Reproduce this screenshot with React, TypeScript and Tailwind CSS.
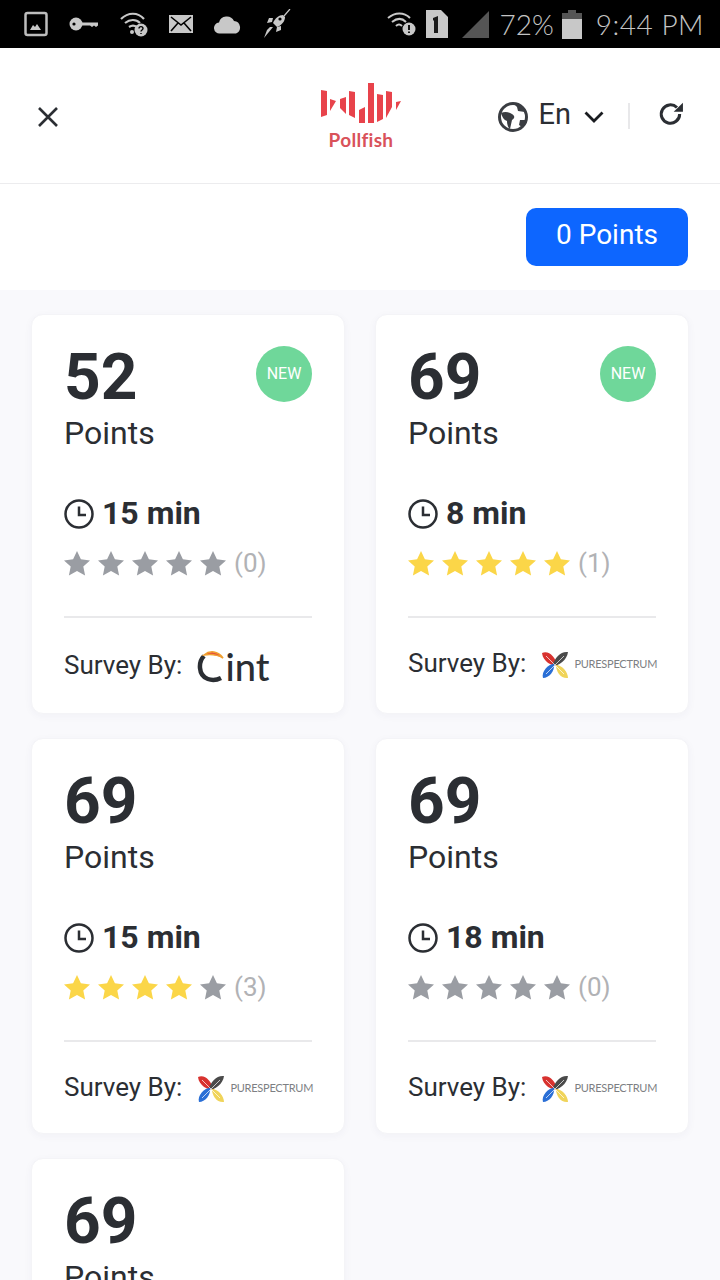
import React from "react";

const roboto = { fontFamily: "Roboto, sans-serif" };

const StatusLeft = () => (
  <div className="flex items-center pl-[24px] gap-[21px]">
    <svg width="24" height="26" viewBox="0 0 24 26">
      <rect x="1.5" y="2" width="21" height="22" rx="2" fill="none" stroke="#bdbdbd" strokeWidth="2.5" />
      <path d="M6 19l3-5 2 2 2-3 4 6z" fill="#c8c8c8" />
    </svg>
    <svg width="30" height="18" viewBox="0 0 30 18">
      <circle cx="7" cy="9" r="6.5" fill="#c8c8c8" />
      <circle cx="5" cy="9" r="1.6" fill="#000" />
      <path d="M12 7.5h17v3l-2 1.5-2-1.5-2 1.5-2-1.5h-9z" fill="#c8c8c8" />
    </svg>
    <svg width="28" height="26" viewBox="0 0 28 26">
      <path d="M1 8c7-7 17-7 23 0M5 12c5-4 11-4 15 0M9 16c3-2 5-2 8 0" fill="none" stroke="#c8c8c8" strokeWidth="2.2" />
      <circle cx="12" cy="21" r="2" fill="#c8c8c8" />
      <circle cx="21" cy="19" r="6.5" fill="#c8c8c8" />
      <path d="M19 17.5c0-2.5 4-2.5 4 0 0 1.500-2 1.500-2 3M21 22v1" fill="none" stroke="#000" strokeWidth="1.4" />
    </svg>
    <svg width="24" height="18" viewBox="0 0 24 18">
      <rect width="24" height="18" fill="#c8c8c8" />
      <path d="M2 2l10 8 10-8M2 16l7-8M22 16l-7-8" fill="none" stroke="#000" strokeWidth="1.6" />
    </svg>
    <svg width="28" height="19" viewBox="0 0 28 18">
      <path d="M6 18a5.500 5.500 0 0 1-1-11 8 8 0 0 1 15-1.500 6.500 6.500 0 0 1 2 12.500z" fill="#c8c8c8" />
    </svg>
    <svg width="28" height="30" viewBox="0 0 28 30">
      <path d="M27 0l-6 7" stroke="#c8c8c8" strokeWidth="1.2" />
      <path d="M20 6c-4 0-8 3-10 8l4 4c5-2 8-6 8-10z" fill="#c8c8c8" />
      <path d="M10 9H6l-2 5 5-1zM18 17v4l-5 2 1-5z" fill="#c8c8c8" />
      <path d="M10 18l-9 11 3-8 3-3z" fill="#c8c8c8" />
      <circle cx="17" cy="10" r="1.6" fill="#000" />
    </svg>
  </div>
);

const StatusRight = () => (
  <div className="flex items-center pr-[16px] text-[#c4c4c4]" style={{ fontFamily: "Lato, sans-serif" }}>
    <svg width="30" height="24" viewBox="0 0 30 24">
      <path d="M1 6c7-6 16-6 22 0M5 10c5-4 10-4 14 0M9 14c2-2 4-2 6 0" fill="none" stroke="#c8c8c8" strokeWidth="2" />
      <circle cx="22" cy="17" r="6.500" fill="#c8c8c8" />
      <path d="M22 13v5M22 19.500v1.500" stroke="#000" strokeWidth="1.800" />
    </svg>
    <svg className="ml-[9px]" width="22" height="28" viewBox="0 0 22 28">
      <path d="M0 0h15l7 7v21H0z" fill="#c8c8c8" />
      <path d="M7 8l5-2v17H8V10l-1 1z" fill="#1a1a1a" />
    </svg>
    <svg className="ml-[14px]" width="27" height="27" viewBox="0 0 27 27">
      <path d="M27 0v27H0z" fill="#555" />
    </svg>
    <span className="ml-[11px] text-[28px] leading-none font-light">72%</span>
    <svg className="ml-[8px]" width="20" height="29" viewBox="0 0 20 29">
      <path d="M6 0h8v3h6v26H0V3h6z" fill="#555" />
      <rect y="9" width="20" height="20" fill="#c8c8c8" />
    </svg>
    <span className="ml-[14px] text-[28px] leading-none font-light tracking-[0.5px]">9:44 PM</span>
  </div>
);

const PollfishLogo = () => (
  <div className="flex flex-col items-center">
    <svg width="82" height="42" viewBox="0 0 82 42" className="mt-[2px]">
      <g fill="#e8434b">
        <path d="M1 8l6 1v24l-6 2z" />
        <path d="M10 17l6 2-6 10z" />
        <path d="M20 17l6-2v17l-6-6z" />
        <path d="M29 9l6 1v26l-6-3z" />
        <path d="M39 28l6-3v16h-6z" />
        <path d="M48 1h6v40h-6z" />
        <path d="M57 12l6 1v24l-6 3z" />
        <path d="M66 9l6 1v15l-6 11z" />
        <path d="M76 20l5-1-5 9z" />
      </g>
    </svg>
    <span className="mt-[5px] text-[19px] leading-[22px] font-bold text-[#d9525a] tracking-[0.3px]" style={{ fontFamily: "Lato, sans-serif" }}>
      Pollfish
    </span>
  </div>
);

const Header = () => (
  <header className="h-[136px] bg-white border-b border-[#ececee] grid grid-cols-[1fr_auto_1fr] items-center pl-[38px] pr-[36px]">
    <svg width="20" height="20" viewBox="0 0 20 20" className="mt-[2px]">
      <path d="M1 1l18 18M19 1L1 19" stroke="#2b2e33" strokeWidth="2.600" />
    </svg>
    <PollfishLogo />
    <div className="flex items-center justify-end">
      <svg width="30" height="30" viewBox="0 0 30 30" className="mt-[2px]">
        <circle cx="15" cy="15" r="13.500" fill="#fff" stroke="#3a3d42" strokeWidth="3" />
        <path d="M3 11c4-2 8-1 11 1 3 2 3 4 0 6l-2 9c-2-1-3-5-3-8-3-1-5-4-6-8zM16 2c4 0 8 3 11 8l-7-1-1-4zM22 18l6 0-4 7-3-2z" fill="#3a3d42" />
      </svg>
      <span className="ml-[11px] text-[29px] leading-[36px] text-[#2b2e33] -mt-[4px]">En</span>
      <svg width="20" height="12" viewBox="0 0 20 12" className="ml-[13px] mt-[2px]">
        <path d="M1.500 1.500L10 10l8.500-8.500" fill="none" stroke="#1a1c20" strokeWidth="2.800" />
      </svg>
      <div className="ml-[24px] w-[2px] h-[26px] bg-[#e8e8ea]" />
      <svg width="26" height="26" viewBox="0 0 24 24" className="ml-[28px] -mt-[4px]">
        <path d="M20 12a8.500 8.500 0 1 1-2.500-6" fill="none" stroke="#2b2e33" strokeWidth="2.800" />
        <path d="M23 1.500V10h-8.500z" fill="#2b2e33" />
      </svg>
    </div>
  </header>
);

const Clock = () => (
  <svg width="30" height="30" viewBox="0 0 30 30">
    <circle cx="15" cy="15" r="13.500" fill="none" stroke="#2b2e33" strokeWidth="2.500" />
    <path d="M15 7.500V16h7" fill="none" stroke="#2b2e33" strokeWidth="2.500" />
  </svg>
);

const Star = ({ on }: { on: boolean }) => (
  <svg width="26" height="25" viewBox="0 0 26 25">
    <path
      d="M13 0l3.900 8.300 9.100 1.100-6.700 6.200 1.800 9L13 20.100 4.900 24.600l1.800-9L0 9.400l9.100-1.100z"
      fill={on ? "#fbd648" : "#9a9da3"}
    />
  </svg>
);

const CintLogo = () => (
  <div className="ml-[15px] flex items-center h-[48px]">
    <svg width="28" height="34" viewBox="0 0 28 34" className="mt-[2px]">
      <path d="M24 29c-8 4-20 2-21-10-.5-6 1-9 4-12" fill="none" stroke="#2b2e33" strokeWidth="4.500" />
      <path d="M7 6c6-5 14-4 19 3-5-3-12-4-19-3z" fill="#e8503a" stroke="#f0a030" strokeWidth="1.500" />
    </svg>
    <span className="text-[38px] leading-none text-[#2b2e33] font-medium mt-[2px]" style={{ fontFamily: "Lato, sans-serif" }}>
      int
    </span>
  </div>
);

const PureSpectrumLogo = () => (
  <div className="ml-[15px] mt-[3px] flex items-center">
    <svg width="28" height="28" viewBox="0 0 28 28">
      <path d="M1 2c7-3 13 4 16 13-6 0-15-4-16-13z" fill="#d8322f" />
      <path d="M27 1c-7-1-13 5-16 14 7 0 15-6 16-14z" fill="#4a4a4a" />
      <path d="M2 27c-2-6 5-14 11-14 1 7-5 14-11 14z" fill="#2a6fd6" />
      <path d="M27 27c0-6-6-13-12-13 0 7 5 14 12 13z" fill="#f0d45a" />
      <path d="M5 5l18 18M23 5L5 23" stroke="#fff" strokeWidth="0.700" />
    </svg>
    <span className="ml-[5px] text-[11px] tracking-[-0.25px] text-[#7d7f83]" style={{ fontFamily: "Lato, sans-serif" }}>
      PURESPECTRUM
    </span>
  </div>
);

type Survey = {
  points: number;
  isNew?: boolean;
  mins: number;
  stars: number;
  votes: number;
  by: "cint" | "pure";
};

const surveys: Survey[] = [
  { points: 52, isNew: true, mins: 15, stars: 0, votes: 0, by: "cint" },
  { points: 69, isNew: true, mins: 8, stars: 5, votes: 1, by: "pure" },
  { points: 69, mins: 15, stars: 4, votes: 3, by: "pure" },
  { points: 69, mins: 18, stars: 0, votes: 0, by: "pure" },
  { points: 69, mins: 12, stars: 3, votes: 2, by: "pure" },
];

const Card = ({ s }: { s: Survey }) => (
  <div className="bg-white rounded-[12px] border border-[#f4f4f7] shadow-[0_2px_8px_rgba(60,60,110,0.04)] px-[32px] pt-[31px] text-[#2b2e33]">
    <div className="flex justify-between items-start">
      <div className="text-[64px] leading-[64px] font-bold">{s.points}</div>
      {s.isNew && (
        <div className="w-[56px] h-[56px] rounded-full bg-[#6fd79a] text-white text-[16px] flex items-center justify-center">
          NEW
        </div>
      )}
    </div>
    <div className="text-[32px] leading-[40px] mt-[3px]">Points</div>
    <div className="flex items-center mt-[43px] h-[36px]">
      <Clock />
      <span className="ml-[8px] -mt-[2px] text-[32px] leading-[36px] font-bold">{s.mins} min</span>
    </div>
    <div className="flex items-center mt-[15px] h-[32px]">
      <div className="flex gap-[8px]">
        {[0, 1, 2, 3, 4].map((i) => (
          <Star key={i} on={i < s.stars} />
        ))}
      </div>
      <span className="ml-[8px] text-[26px] leading-[32px] text-[#b1b2b5]">({s.votes})</span>
    </div>
    <div className="mt-[37px] h-[2px] bg-[#e9e9eb]" />
    <div className="flex items-center pt-[23px] pb-[24px]">
      <span className="text-[26px] leading-[44px] whitespace-nowrap">Survey By:</span>
      {s.by === "cint" ? <CintLogo /> : <PureSpectrumLogo />}
    </div>
  </div>
);

export default function App() {
  return (
    <div className="w-[720px] h-[1280px] overflow-hidden bg-[#f9f9fc]" style={roboto}>
      <div className="h-[48px] bg-black flex items-center justify-between">
        <StatusLeft />
        <StatusRight />
      </div>
      <Header />
      <div className="h-[106px] bg-white flex items-center justify-end pr-[32px]">
        <button className="w-[162px] h-[58px] rounded-[10px] bg-[#0d66ff] text-white text-[28px] pb-[4px]">0 Points</button>
      </div>
      <div className="grid grid-cols-2 gap-x-[30px] gap-y-[24px] px-[31px] pt-[24px] items-stretch">
        {surveys.map((s, i) => (
          <Card key={i} s={s} />
        ))}
      </div>
    </div>
  );
}
